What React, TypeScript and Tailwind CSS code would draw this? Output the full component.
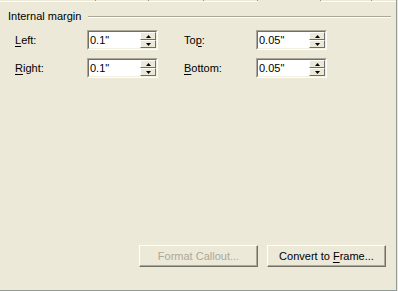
import React from 'react'

const font = { fontFamily: '"Liberation Sans", Arial, sans-serif' }

function Tab({ w, selected, last }: { w: number; selected?: boolean; last?: boolean }) {
  return (
    <div className="flex flex-col" style={{ width: w }}>
      <div className={`h-[1px] ${last ? '' : 'border-r border-[#919B9C]'}`} />
      <div className={`h-[1px] ${selected ? '' : 'bg-white'}`} />
    </div>
  )
}

function Arrow({ up }: { up?: boolean }) {
  return (
    <svg width="5" height="3" viewBox="0 0 5 3" className="block">
      {up ? <path d="M2.5 0 L5 3 L0 3 Z" fill="#000" /> : <path d="M0 0 L5 0 L2.5 3 Z" fill="#000" />}
    </svg>
  )
}

function SpinButton({ up }: { up?: boolean }) {
  return (
    <div className="h-[8px] w-[16px] bg-[#ECE9D8] border border-t-white border-l-white border-r-[#716F64] border-b-[#716F64] flex items-center justify-center">
      <Arrow up={up} />
    </div>
  )
}

function Spinner({ value }: { value: string }) {
  return (
    <div className="w-[71px] h-[20px] border border-t-[#ACA899] border-l-[#ACA899] border-r-white border-b-white">
      <div className="h-full border border-t-[#716F64] border-l-[#716F64] border-r-[#F1EFE2] border-b-[#F1EFE2] bg-white flex">
        <div className="flex-1 pl-[1px] text-[11px] leading-[16px] text-black">{value}</div>
        <div className="flex flex-col">
          <SpinButton up />
          <SpinButton />
        </div>
      </div>
    </div>
  )
}

function Label({ pre, key_, post }: { pre: string; key_: string; post: string }) {
  return (
    <div className="w-[72px] text-[11px] text-black">
      {pre}
      <span className="underline underline-offset-2">{key_}</span>
      {post}
    </div>
  )
}

export default function App() {
  return (
    <div className="w-[398px] h-[291px] bg-[#ECE9D8]" style={font}>
      <div className="w-[397px] h-[291px] border-r border-b border-[#919B9C] flex flex-col">
        <div className="flex h-[2px]">
          <Tab w={96} />
          <Tab w={53} />
          <Tab w={55} />
          <Tab w={54} />
          <Tab w={63} selected />
          <Tab w={51} />
          <Tab w={24} last />
        </div>

        <div className="mt-[8px] pl-[8px] pr-[5px] flex items-center">
          <span className="text-[11px] leading-[13px] text-black">Internal margin</span>
          <div className="flex-1 ml-[7px] h-[2px] border-t border-t-[#ACA899] border-b border-b-white" />
        </div>

        <div className="mt-[7px] pl-[15px] flex flex-col gap-[8px]">
          <div className="flex items-center">
            <Label pre="" key_="L" post="eft:" />
            <Spinner value={'0.1"'} />
            <div className="w-[26px]" />
            <Label pre="To" key_="p" post=":" />
            <Spinner value={'0.05"'} />
          </div>
          <div className="flex items-center">
            <Label pre="" key_="R" post="ight:" />
            <Spinner value={'0.1"'} />
            <div className="w-[26px]" />
            <Label pre="" key_="B" post="ottom:" />
            <Spinner value={'0.05"'} />
          </div>
        </div>

        <div className="mt-auto mb-[23px] pr-[10px] flex justify-end gap-[9px]">
          <button className="w-[119px] h-[22px] bg-[#ECE9D8] border border-t-white border-l-white border-r-[#716F64] border-b-[#716F64] shadow-[inset_-1px_-1px_0_#ACA899] text-[11px] text-[#ACA899]">
            Format Callout...
          </button>
          <button className="w-[119px] h-[22px] bg-[#ECE9D8] border border-t-white border-l-white border-r-[#716F64] border-b-[#716F64] shadow-[inset_-1px_-1px_0_#ACA899] text-[11px] text-black">
            Convert to <span className="underline underline-offset-2">F</span>rame...
          </button>
        </div>
      </div>
    </div>
  )
}
